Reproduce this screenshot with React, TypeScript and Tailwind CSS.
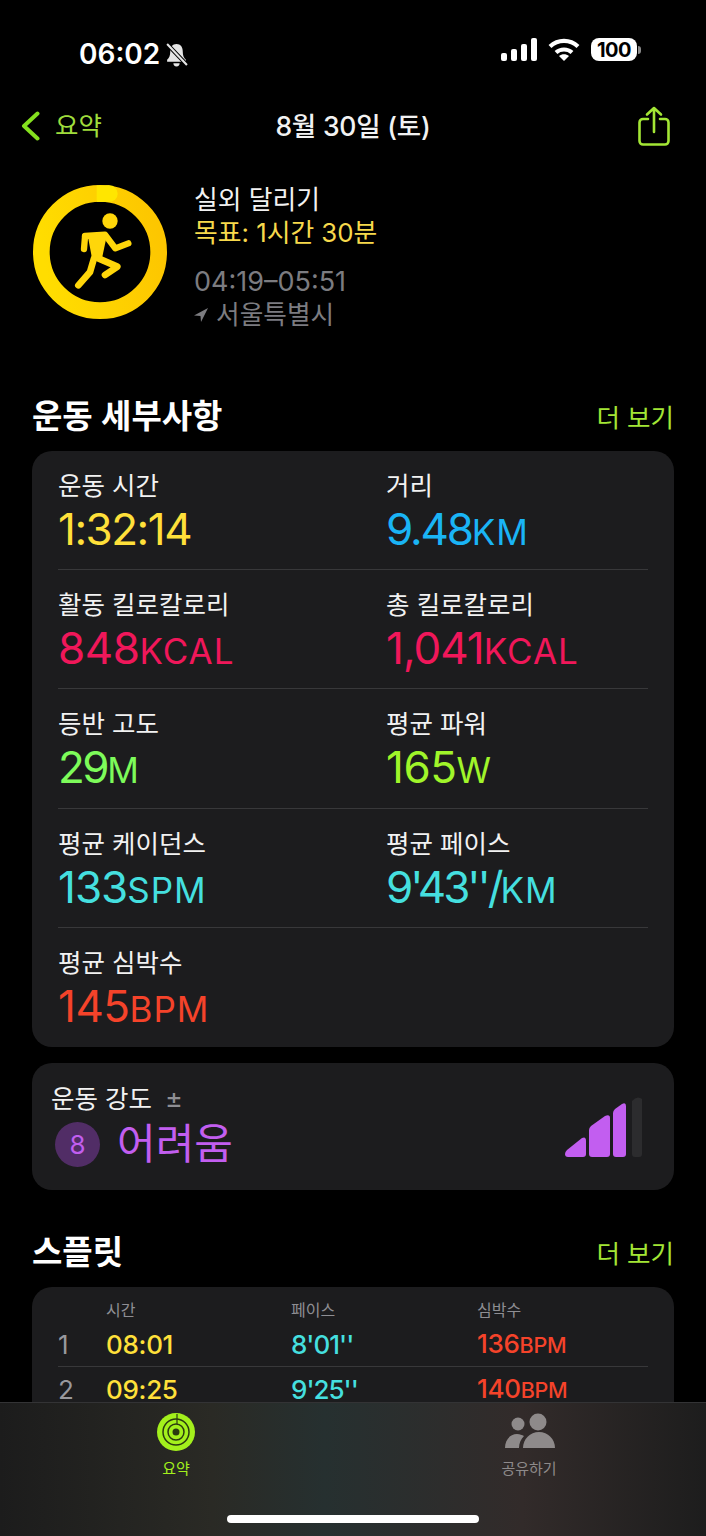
import React from 'react';

const font = { fontFamily: 'Inter, "Noto Sans CJK KR", sans-serif' };

function Stat({ label, value, unit, color, track = 'tracking-[-0.5px]' }: { label: string; value: string; unit?: string; color: string; track?: string }) {
    return (
        <div className="pt-[19px]">
            <p className="text-[25.500px] leading-[32px] text-[#f2f2f2]">{label}</p>
            <p className={`mt-[1px] h-[52px] text-[44px] leading-[52px] ${color}`}>
                <span className={track}>{value}</span>
                {unit && <span className="text-[35px] tracking-[1px]">{unit}</span>}
            </p>
        </div>
    );
}

function SectionHead({ title }: { title: string }) {
    return (
        <div className="flex h-10 items-center justify-between">
            <h2 className="mt-[3px] text-[33px] font-semibold text-white">{title}</h2>
            <span className="mt-[6px] text-[25.500px] text-[#a3e635]">더 보기</span>
        </div>
    );
}

function SplitRow({ n, time, pace, bpm }: { n: string; time: string; pace: string; bpm: string }) {
    return (
        <div className="grid h-[45px] grid-cols-[48px_185px_186px_1fr] items-center text-[26px] leading-[32px] tracking-[-0.3px]">
            <span className="text-[#98989d]">{n}</span>
            <span className="font-medium text-[#ffe03a]">{time}</span>
            <span className="font-medium tracking-[-1px] text-[#45dfdf]">{pace}</span>
            <span className="font-medium text-[#f5432a]">
                {bpm}
                <span className="text-[21.500px]">BPM</span>
            </span>
        </div>
    );
}

function Ring() {
    return (
        <svg width="134" height="134" viewBox="99 495 402 402" className="ml-[1px] shrink-0">
            <defs>
                <linearGradient id="ring" x1="1" y1="0.3" x2="0" y2="0.5">
                    <stop offset="0" stopColor="#fdc600" />
                    <stop offset="1" stopColor="#ffdd00" />
                </linearGradient>
            </defs>
            <circle cx="300" cy="696" r="176" fill="none" stroke="url(#ring)" strokeWidth="50" />
            <circle cx="328" cy="521" r="25" fill="#ffe600" />
            <path d="M290 496 L328 496 L328 546 L290 546Z" fill="#ffe600" />
            <g fill="none" stroke="#ffd60a" strokeLinecap="round" strokeLinejoin="round">
                <circle cx="330" cy="603" r="23" fill="#ffd60a" stroke="none" />
                <path d="M255 650 L252 687" strokeWidth="19" />
                <path d="M255 648 L315 644 L346 685 L385 670" strokeWidth="19" />
                <path d="M262 640 L322 640 L306 715 L276 715Z" fill="#ffd60a" stroke="none" />
                <path d="M295 715 L352 740 L315 765" strokeWidth="20" />
                <path d="M282 715 L270 756 L235 796" strokeWidth="20" />
            </g>
        </svg>
    );
}

function Bars() {
    return (
        <svg width="78" height="60" viewBox="0 0 78 60" className="mb-[10px] shrink-0">
            <path d="M0 57 Q0 55 2 53 L17 41 Q21 39 21 44 L21 57 Q21 60 18 60 L3 60 Q0 60 0 57Z" fill="#c25ef0" />
            <path d="M24 33 Q24 31 26 29 L40 19 Q45 17 45 21 L45 57 Q45 60 42 60 L27 60 Q24 60 24 57Z" fill="#c25ef0" />
            <path d="M48 16 Q48 14 50 12 L57 7 Q61 5 61 9 L61 57 Q61 60 58 60 L51 60 Q48 60 48 57Z" fill="#c25ef0" />
            <path d="M67 4 Q72 -2 77 2 L77 57 Q77 60 74 60 L70 60 Q67 60 67 57Z" fill="#2c2c2e" />
        </svg>
    );
}

export default function App() {
    return (
        <div style={font} className="relative h-[1536px] w-[706px] overflow-hidden bg-black text-white">
            {/* Status bar */}
            <div className="flex h-[100px] items-start justify-between pl-[79px] pr-[65px] pt-[39px]">
                <div className="flex items-center gap-[4px]">
                    <span className="text-[28px] font-semibold leading-[30px]">06:02</span>
                    <svg width="25" height="25" viewBox="0 0 24 24" fill="#e5e5e5">
                        <path d="M12 2c-4 0-6 3-6 7 0 4-1 6-3 8v2h18v-2c-2-2-3-4-3-8 0-4-2-7-6-7z" />
                        <path d="M9 20.500h6a3 3 0 0 1-6 0z" />
                        <path d="M3 2l19 20" stroke="#000" strokeWidth="4" />
                        <path d="M3 2l19 20" stroke="#e5e5e5" strokeWidth="2" />
                    </svg>
                </div>
                <div className="-mt-[1px] flex items-center gap-[11px]">
                    <svg width="36" height="23" viewBox="0 0 36 23" fill="#fff">
                        <rect x="0" y="15" width="6" height="8" rx="2" />
                        <rect x="10" y="11" width="6" height="12" rx="2" />
                        <rect x="20" y="6" width="6" height="17" rx="2" />
                        <rect x="30" y="0" width="6" height="23" rx="2" />
                    </svg>
                    <svg width="32" height="23" viewBox="0 0 32 23" fill="none" stroke="#fff" strokeWidth="4.200">
                        <path d="M2 8.500C10 1 22 1 30 8.500" />
                        <path d="M8 14.500c4.500-4 11.500-4 16 0" />
                        <path d="M16 23l-5-5c3-2.400 7-2.400 10 0z" fill="#fff" stroke="none" />
                    </svg>
                    <div className="flex items-center gap-[1px]">
                        <div className="flex h-[23px] w-[46px] items-center justify-center rounded-[8px] bg-white text-[20px] font-bold leading-none tracking-[-0.5px] text-black">
                            100
                        </div>
                        <div className="h-[8px] w-[3px] rounded-r-full bg-[#8a8a8a]" />
                    </div>
                </div>
            </div>

            {/* Nav */}
            <div className="flex h-[52px] items-center justify-between pl-[21px] pr-[36px]">
                <div className="flex w-[215px] items-center gap-[16px]">
                    <svg width="19" height="30" viewBox="0 0 19 30" fill="none" stroke="#84e01e" strokeWidth="4" strokeLinecap="round" strokeLinejoin="round">
                        <path d="M16.500 2.500 L3 15 L16.500 27.500" />
                    </svg>
                    <span className="-ml-[1px] mt-[1px] text-[25.500px] text-[#9fdc3c]">요약</span>
                </div>
                <h1 className="mt-[2px] text-[26.500px] font-medium tracking-[-0.2px] text-[#f2f2f2]">8월 30일 (토)</h1>
                <div className="flex w-[200px] justify-end">
                    <svg width="32" height="40" viewBox="0 0 32 40" fill="none" stroke="#a3e635" strokeWidth="2.600" strokeLinecap="round" strokeLinejoin="round">
                        <path d="M16 26V2M9 8.500L16 2l7 6.500" />
                        <path d="M10 13H5a3.500 3.500 0 0 0-3.500 3.500V35A3.500 3.500 0 0 0 5 38.500h22a3.500 3.500 0 0 0 3.500-3.500V16.500A3.500 3.500 0 0 0 27 13h-5" />
                    </svg>
                </div>
            </div>

            <div className="px-[32px]">
                {/* Workout header */}
                <div className="mt-[33px] flex h-[134px] gap-[27px]">
                    <Ring />
                    <div className="-mt-[2px]">
                        <p className="text-[25.800px] leading-[33px] text-[#f2f2f2]">실외 달리기</p>
                        <p className="text-[25.800px] leading-[33px] text-[#f7d94c]">목표: 1시간 30분</p>
                        <p className="mt-[17px] text-[27px] leading-[32px] text-[#7c7c80]">04:19–05:51</p>
                        <p className="flex items-center gap-[8px] text-[25.700px] leading-[33px] text-[#7c7c80]">
                            <svg width="14" height="14" viewBox="0 0 14 14" fill="#7c7c80">
                                <path d="M14 0L0 7.500l6.500.5.500 6z" />
                            </svg>
                            서울특별시
                        </p>
                    </div>
                </div>

                {/* Workout details */}
                <div className="mt-[76px]">
                    <SectionHead title="운동 세부사항" />
                </div>
                <div className="mt-[16px] h-[596px] rounded-[20px] bg-[#1c1c1e] px-[26px]">
                    <div className="grid h-[119px] grid-cols-[328px_1fr] border-b border-[#38383a]">
                        <Stat label="운동 시간" value="1:32:14" color="text-[#ffe03a]" track="tracking-[-1.5px]" />
                        <Stat label="거리" value="9.48" unit="KM" color="text-[#1ab4f5]" track="tracking-[-2.2px]" />
                    </div>
                    <div className="grid h-[119px] grid-cols-[328px_1fr] border-b border-[#38383a]">
                        <Stat label="활동 킬로칼로리" value="848" unit="KCAL" color="text-[#f0175a]" />
                        <Stat label="총 킬로칼로리" value="1,041" unit="KCAL" color="text-[#f0175a]" track="tracking-[-1px]" />
                    </div>
                    <div className="grid h-[120px] grid-cols-[328px_1fr] border-b border-[#38383a]">
                        <Stat label="등반 고도" value="29" unit="M" color="text-[#7dfb5a]" track="tracking-[-2.5px]" />
                        <Stat label="평균 파워" value="165" unit="W" color="text-[#a0f52a]" />
                    </div>
                    <div className="grid h-[119px] grid-cols-[328px_1fr] border-b border-[#38383a]">
                        <Stat label="평균 케이던스" value="133" unit="SPM" color="text-[#45dfdf]" track="tracking-[-1px]" />
                        <Stat label="평균 페이스" value="9'43''/" unit="KM" color="text-[#45dfdf]" track="tracking-[-3px]" />
                    </div>
                    <Stat label="평균 심박수" value="145" unit="BPM" color="text-[#f5432a]" />
                </div>

                {/* Effort */}
                <div className="mt-[16px] flex h-[127px] items-end justify-between rounded-[20px] bg-[#1c1c1e] pb-[23px] pl-[19px] pr-[31px]">
                    <div>
                        <p className="flex items-center gap-[13px] text-[25.500px] leading-[32px] text-[#f2f2f2]">
                            운동 강도
                            <span className="text-[27px] text-[#8e8e93]">±</span>
                        </p>
                        <div className="ml-[4px] mt-[6px] flex items-center gap-[17px]">
                            <span className="flex h-[45px] w-[45px] items-center justify-center rounded-full bg-[#512d66] text-[26px] text-[#c25ef0]">8</span>
                            <span className="text-[42px] leading-[46px] text-[#c25ef0]">어려움</span>
                        </div>
                    </div>
                    <Bars />
                </div>

                {/* Splits */}
                <div className="mt-[41px]">
                    <SectionHead title="스플릿" />
                </div>
                <div className="mt-[16px] h-[200px] rounded-[20px] bg-[#1c1c1e] px-[26px] pt-[11px]">
                    <div className="grid grid-cols-[48px_185px_186px_1fr] text-[16px] leading-[24px] text-[#8e8e93]">
                        <span />
                        <span>시간</span>
                        <span>페이스</span>
                        <span>심박수</span>
                    </div>
                    <div className="h-[45px] border-b border-[#38383a]">
                        <SplitRow n="1" time="08:01" pace="8'01''" bpm="136" />
                    </div>
                    <SplitRow n="2" time="09:25" pace="9'25''" bpm="140" />
                </div>
            </div>

            {/* Tab bar */}
            <div className="absolute bottom-0 left-0 h-[134px] w-full border-t border-[#333335] bg-[linear-gradient(90deg,#1c1c1c_0%,#2a2a25_30%,#263030_46%,#322b2a_74%,#1d1d1d_100%)]">
                <div className="flex pt-[10px]">
                    <div className="ml-[126px] flex w-[100px] flex-col items-center">
                        <svg width="38" height="38" viewBox="0 0 38 38" fill="none">
                            <circle cx="19" cy="19" r="19" fill="#a3f01c" />
                            <circle cx="19" cy="19" r="13" stroke="#2a3a10" strokeWidth="1.500" />
                            <circle cx="19" cy="19" r="8" stroke="#2a3a10" strokeWidth="1.500" />
                            <circle cx="19" cy="19" r="3.500" fill="#2a3a10" />
                            <path d="M20 1v10" stroke="#2a3a10" strokeWidth="1.200" />
                        </svg>
                        <span className="mt-[8px] text-[15px] leading-[20px] text-[#a3f01c]">요약</span>
                    </div>
                    <div className="ml-[253px] flex w-[100px] flex-col items-center">
                        <svg width="52" height="38" viewBox="0 0 52 38" fill="#8e8a8a">
                            <circle cx="15" cy="11" r="6.500" />
                            <circle cx="35" cy="9" r="8.500" />
                            <path d="M2 35c0-8 5-14 12-14 3 0 5 1 7 2-3 3-5 7-5 12z" />
                            <path d="M20 35c0-9 7-16 16-16s16 7 16 16z" />
                        </svg>
                        <span className="mt-[8px] text-[15px] leading-[20px] text-[#8e8a8a]">공유하기</span>
                    </div>
                </div>
                <div className="absolute bottom-[13px] left-[227px] h-[8px] w-[252px] rounded-full bg-white" />
            </div>
        </div>
    );
}
